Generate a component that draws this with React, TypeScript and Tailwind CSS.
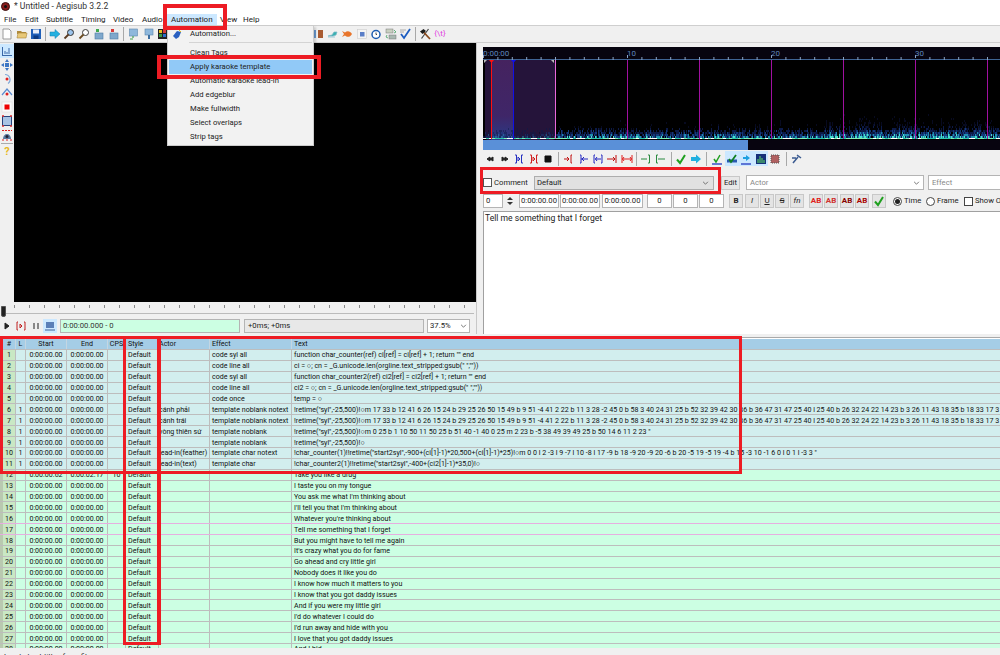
import type { ReactNode } from "react";

const Svg = ({ children }: { children: ReactNode }) => (
  <svg viewBox="0 0 12 12" className="w-3 h-3 block">
    {children}
  </svg>
);

const Tool = ({ children, active }: { children?: ReactNode; active?: boolean }) => (
  <div className={`w-[14.5px] h-[15px] shrink-0 flex items-center justify-center ${active ? "bg-[#cce8ff]" : ""}`}>
    {children}
  </div>
);

const Sep = ({ w = "w-[4px]" }: { w?: string }) => (
  <div className={`${w} h-[14px] shrink-0 flex justify-center`}>
    <div className="w-px h-full bg-[#a8a8a8]" />
  </div>
);

// main toolbar icons
const icons: Record<string, ReactNode> = {
  page: <path d="M2 1h6l2 2v8H2z" fill="#fff" stroke="#9a9a9a" />,
  folder: (
    <>
      <path d="M1 3h4l1 1h4v2H1z" fill="#b08a3c" />
      <path d="M1 10l1-5h9l-1 5z" fill="#e8c878" stroke="#a88436" strokeWidth=".6" />
    </>
  ),
  save: (
    <>
      <rect x="1" y="1" width="10" height="10" fill="#1f5fb8" />
      <rect x="3" y="1.5" width="6" height="4" fill="#e8eef8" />
      <rect x="3.5" y="7.5" width="5" height="3.5" fill="#0d3a80" />
    </>
  ),
  jump: <path d="M1 4h5V1.5L11 6l-5 4.500V8H1z" fill="#22b0e0" stroke="#127fb0" strokeWidth=".5" />,
  zoomIn: (
    <>
      <circle cx="7.500" cy="4.500" r="3" fill="#9cc4ec" stroke="#333" />
      <path d="M5.500 6.500L1.500 10.500" stroke="#5a3a20" strokeWidth="1.800" />
    </>
  ),
  zoomOut: (
    <>
      <circle cx="7.500" cy="4.500" r="3" fill="#fff" stroke="#3c3c3c" />
      <path d="M5.500 6.500L1.500 10.500" stroke="#6a4a20" strokeWidth="1.800" />
    </>
  ),
  propsDoc: (
    <>
      <rect x="3" y="5" width="8" height="6" fill="#7fa8cc" stroke="#4d7ca6" strokeWidth=".6" />
      <rect x="4" y="1" width="3" height="3" fill="#40a850" />
    </>
  ),
  fontsDoc: (
    <>
      <rect x="3" y="5" width="8" height="6" fill="#7fa8cc" stroke="#4d7ca6" strokeWidth=".6" />
      <rect x="4" y="1" width="3" height="3" fill="#d83a3a" />
    </>
  ),
  monitor: (
    <>
      <rect x="1.500" y="1" width="8" height="7" fill="#8fb8dc" stroke="#5c87ad" strokeWidth=".6" />
      <path d="M5 8v2M2 11h3" stroke="#44a050" strokeWidth="1.200" />
    </>
  ),
  pin: (
    <>
      <rect x="2" y="1" width="8" height="6" fill="#8fb8dc" stroke="#5c87ad" strokeWidth=".6" />
      <path d="M6 7v4" stroke="#3c6ea0" strokeWidth="2" />
    </>
  ),
  mosaic: (
    <>
      <rect x="1" y="1" width="10" height="10" fill="#222" />
      <rect x="2" y="2" width="3" height="3" fill="#e6c020" />
      <rect x="6" y="2" width="3" height="3" fill="#d83a3a" />
      <rect x="2" y="6" width="3" height="3" fill="#3a9a40" />
      <rect x="6" y="6" width="3" height="3" fill="#2a70d0" />
    </>
  ),
  split: (
    <>
      <rect x="6" y="2" width="5" height="8" fill="#a85a30" />
      <rect x="1" y="2" width="3" height="8" fill="#6a9ad0" />
    </>
  ),
  teal: <path d="M1 8l4-1 2-3 3 0-1 3-3 1zM1 9h7" fill="#38b0b0" stroke="#7cb8c8" strokeWidth=".7" />,
  fish: <path d="M1 3l2 3-2 3 3-1.500c2 2 5 2 7-1.500-2-3.500-5-3.500-7-1.500z" fill="#e8742a" />,
  square: (
    <>
      <rect x="1.500" y="1.500" width="9" height="9" fill="#f4f4f4" stroke="#ccc" strokeWidth=".6" />
      <rect x="4" y="4" width="4.500" height="4.500" fill="#5a7ec8" />
    </>
  ),
  clock: (
    <>
      <circle cx="6" cy="6.500" r="4" fill="#fff" stroke="#1c5cb0" strokeWidth="1.500" />
      <path d="M6 4.500v2h1" stroke="#222" strokeWidth=".8" fill="none" />
    </>
  ),
  textDoc: (
    <>
      <rect x="1" y="1" width="7" height="4" fill="#c8d0c0" stroke="#777" strokeWidth=".5" />
      <rect x="4" y="7" width="7" height="4" fill="#a8b8b0" stroke="#777" strokeWidth=".5" />
      <path d="M9 2l2 2-2 1M2 7L1 9l2 1" stroke="#40a060" fill="none" strokeWidth=".8" />
    </>
  ),
  bluecheck: (
    <>
      <path d="M1 2h6M1 4h4" stroke="#999" strokeWidth=".8" />
      <path d="M2 6l3 4 6-9" stroke="#1c5cc0" strokeWidth="1.800" fill="none" />
    </>
  ),
  hammer: (
    <>
      <path d="M9.500 1L2.500 10.500" stroke="#444" strokeWidth="1.200" />
      <path d="M4.500 4l6.500 7" stroke="#8a4a1c" strokeWidth="1.800" />
      <path d="M1 3.500L4.500 1 7 3 3.500 6z" fill="#1c1c1c" />
    </>
  ),
};

const MainIcon = ({ name }: { name: string }) => <Svg>{icons[name]}</Svg>;

// little square for the side bar
const side: ReactNode[] = [
  <path key="a" d="M1 10.500h10M1.500 2v8.500M4 6v3M6 7v2M8 3v6" stroke="#3b68a8" strokeWidth="1" fill="none" />,
  <path key="b" d="M6 0l2 3H4zM6 12l2-3H4zM0 6l3-2v4zM12 6L9 4v4z M4 4h4v4H4z" fill="#3d76c4" />,
  <>
    <path d="M4 1.500a5 5 0 0 1 3 9" stroke="#7fa8d8" strokeWidth="1.200" fill="none" />
    <circle cx="6" cy="6" r="1.500" fill="#e02020" />
  </>,
  <>
    <path d="M1 8l5-6 5 6" stroke="#5a8cd0" strokeWidth="1.200" fill="none" />
    <circle cx="6" cy="7" r="1.500" fill="#e02020" />
  </>,
  <>
    <rect x="1" y="1" width="10" height="10" fill="#fafafa" stroke="#ddd" strokeWidth=".6" />
    <rect x="3.500" y="3.500" width="5" height="5" fill="#ee0000" />
  </>,
  <>
    <rect x="1.500" y="1.500" width="9" height="9" fill="#a8c4e4" stroke="#26447c" />
    <path d="M1 1h2M9 1h2M1 11h2M9 11h2" stroke="#e03030" strokeWidth="1.500" />
  </>,
  <>
    <path d="M2 10a4 5 0 0 1 8 0z" fill="#5a7aa0" />
    <circle cx="6" cy="7.500" r="1.500" fill="#223" />
    <path d="M1 1.500h10M1 11h2M9 11h2M5 11h2" stroke="#e02020" strokeWidth="1.200" strokeDasharray="2 1" />
  </>,
];

// audio toolbar glyph: line with arrows and brackets
const AudioIcon = ({ d, color, fill }: { d: string; color: string; fill?: boolean }) => (
  <Svg>
    <path d={d} stroke={color} fill={fill ? color : "none"} strokeWidth="1" />
  </Svg>
);

const audioA = [
  { d: "M6 4v4L3 6zM9 4v4L6 6z", color: "#222", fill: true },
  { d: "M3 4v4l3-2zM6 4v4l3-2z", color: "#222", fill: true },
  { d: "M2 2h1.500v8H2M10 2H8.500v8H10M5 4v4l2-2z", color: "#2530c0" },
  { d: "M2 2h1.500v8H2M10 2H8.500v8H10M5 4v4l2-2z", color: "#d02020" },
  { d: "M3 3h6v6H3z", color: "#111", fill: true },
];
const audioB = [
  { d: "M1 6h5M4 4l2 2-2 2M9 2H8v8h1", color: "#c01010" },
  { d: "M3 2h1v8H3M4 6h7M7 4L5 6l2 2", color: "#2428c0" },
  { d: "M3 2H2v8h1M9 2h1v8H9M3 6h6M5 4L3.500 6 5 8", color: "#2428c0" },
  { d: "M1 6h8M7 4l2 2-2 2M10 2v8", color: "#c01010" },
  { d: "M1 2v8M11 2v8M1 6h10M3 4L1.500 6 3 8M9 4l1.500 2L9 8", color: "#e02020" },
];
const audioC = [
  { d: "M1 6h6M8 2h1.500v8H8", color: "#2a8a40" },
  { d: "M3 2H1.500v8H3M3 6h7", color: "#2a8a40" },
];

const Check = () => (
  <Svg>
    <path d="M2 6.500l3 3.500 5-8" stroke="#20a020" strokeWidth="2" fill="none" />
  </Svg>
);

// pseudo random generator so the spectrogram stays the same on every load
let seed = 7;
const rnd = () => {
  seed = (seed * 16807) % 2147483647;
  return seed / 2147483647;
};

const specCells: { x: number; y: number; c: string }[] = [];
for (let x = 0; x < 517; x += 1) {
  const loud = x > 340 ? 1.5 : x > 75 ? 1 : 0.7;
  const streak = 0.35 + rnd() * 0.8;
  for (let y = 136; y >= 84; y -= 2) {
    const h = (136 - y) / 52;
    // faint noise high up, the bright part stays close to the bottom line
    const v = rnd() * streak * loud * Math.pow(1 - h, 12);
    const faint = rnd() * streak * loud * Math.pow(1 - h, 2);
    if (v > 0.08) {
      const c = v > 0.7 ? "#49e0c8" : v > 0.42 ? "#1f8fb0" : v > 0.2 ? "#143a7c" : "#0c1a48";
      specCells.push({ x, y, c });
    } else if (faint > 0.5) {
      specCells.push({ x, y, c: faint > 0.8 ? "#0b1436" : "#070a20" });
    }
  }
}
const specBase: { x: number; w: number; c: string }[] = [];
for (let x = 0; x < 517; x += 3) {
  const v = rnd();
  specBase.push({ x, w: 3, c: v > 0.75 ? "#ffffff" : v > 0.4 ? "#7ff0b8" : "#2ec8b0" });
}

const AudioDisplay = () => (
  <svg viewBox="483 47 517 93" className="w-[517px] h-[93px] block">
    <rect x="483" y="47" width="517" height="93" fill="#000" />
    <rect x="483" y="47" width="517" height="12" fill="#07040f" />
    <defs>
      <linearGradient id="sel" x1="0" y1="0" x2="0" y2="1">
        <stop offset="0" stopColor="#45235f" />
        <stop offset="0.7" stopColor="#3f2668" />
        <stop offset="1" stopColor="#2a3a86" />
      </linearGradient>
    </defs>
    <rect x="485" y="60" width="70" height="80" rx="3" fill="#25143a" />
    <rect x="491" y="60" width="22" height="80" fill="url(#sel)" />
    {specCells.map((s, i) => (
      <rect key={i} x={483 + s.x} y={s.y} width="1" height="2" fill={s.c} fillOpacity={s.x < 72 ? 0.5 : 1} />
    ))}
    {specBase.map((s, i) => (
      <rect key={i} x={483 + s.x} y="138" width={s.w} height="1" fill={s.c} />
    ))}
    <path d="M483 59.500H1000" stroke="#3f6494" />
    {Array.from({ length: 36 }, (_, i) => (
      <path key={i} d={`M${483 + i * 14.4 + 0.5} ${i % 10 === 0 ? 55 : 57}v3`} stroke="#8ba4c4" />
    ))}
    {[627, 699, 771, 843, 915, 987].map((x) => (
      <rect key={x} x={x} y="60" width="1" height="79" fill="#a010a0" />
    ))}
    <rect x="555" y="60" width="1" height="79" fill="#e868d8" />
    <rect x="491" y="60" width="1" height="79" fill="#ff1010" />
    <rect x="513" y="60" width="1" height="79" fill="#1010e8" />
    <path d="M489 60h5l-2.500 3z" fill="#ff1010" />
    <path d="M511 60h5l-2.500 3z" fill="#1010e8" />
    <path d="M484 60h3l-3 3zM554 60h-3l3 3z" fill="#bbb" />
    <text x="483" y="56" fill="#5f86bd" fontSize="8" fontFamily="Roboto, sans-serif">0:00:00</text>
    <text x="627" y="56" fill="#5f86bd" fontSize="8" fontFamily="Roboto, sans-serif">10</text>
    <text x="771" y="56" fill="#5f86bd" fontSize="8" fontFamily="Roboto, sans-serif">20</text>
    <text x="915" y="56" fill="#5f86bd" fontSize="8" fontFamily="Roboto, sans-serif">30</text>
  </svg>
);

const Field = ({ w, children, center, cls = "" }: { w: string; children?: ReactNode; center?: boolean; cls?: string }) => (
  <div className={`${w} h-[14px] shrink-0 border border-[#b4b4b4] bg-white flex items-center px-[2px] whitespace-nowrap ${center ? "justify-center" : ""} ${cls}`}>
    {children}
  </div>
);

const Btn = ({ children, cls = "" }: { children: ReactNode; cls?: string }) => (
  <div className={`w-[14px] h-[14px] shrink-0 border border-[#c8c8c8] bg-[#e4e4e4] flex items-center justify-center text-[8px] ${cls}`}>
    {children}
  </div>
);

type Row = { n: number; l?: string; start?: string; end?: string; cps?: string; actor?: string; effect?: string; text: string; comment?: boolean; active?: boolean };

const long6 =
  '!retime("syl",-25,500)!○m 17 33 b 12 41 6 26 15 24 b 29 25 26 50 15 49 b 9 51 -4 41 2 22 b 11 3 28 -2 45 0 b 58 3 40 24 31 25 b 52 32 39 42 30 36 b 36 47 31 47 25 40 l 25 40 b 26 32 24 22 14 23 b 3 26 11 43 18 35 b 18 33 17 3';

const rows: Row[] = [
  { n: 1, effect: "code syl all", text: 'function char_counter(ref) ci[ref] = ci[ref] + 1; return "" end', comment: true },
  { n: 2, effect: "code line all", text: 'ci = ○; cn = _G.unicode.len(orgline.text_stripped:gsub(" ",""))', comment: true },
  { n: 3, effect: "code syl all", text: 'function char_counter2(ref) ci2[ref] = ci2[ref] + 1; return "" end', comment: true },
  { n: 4, effect: "code line all", text: 'ci2 = ○; cn = _G.unicode.len(orgline.text_stripped:gsub(" ",""))', comment: true },
  { n: 5, effect: "code once", text: "temp = ○", comment: true },
  { n: 6, l: "1", actor: "cánh phải", effect: "template noblank notext", text: long6, comment: true },
  { n: 7, l: "1", actor: "cánh trái", effect: "template noblank notext", text: long6, comment: true },
  { n: 8, l: "1", actor: "vòng thiên sứ", effect: "template noblank", text: '!retime("syl",-25,500)!○m 0 25 b 1 10 50 11 50 25 b 51 40 -1 40 0 25 m 2 23 b -5 38 49 39 49 25 b 50 14 6 11 2 23 "', comment: true },
  { n: 9, l: "1", effect: "template noblank", text: '!retime("syl",-25,500)!○', comment: true },
  { n: 10, l: "1", actor: "lead-in(feather)", effect: "template char notext", text: '!char_counter(1)!!retime("start2syl",-900+(ci[1]-1)*20,500+(ci[1]-1)*25)!○m 0 0 l 2 -3 l 9 -7 l 10 -8 l 17 -9 b 18 -9 20 -9 20 -6 b 20 -5 19 -5 19 -4 b 15 -3 10 -1 6 0 l 0 1 l -3 3 "', comment: true },
  { n: 11, l: "1", actor: "lead-in(text)", effect: "template char", text: '!char_counter2(1)!!retime("start2syl",-400+(ci2[1]-1)*35,0)!○', comment: true },
  { n: 12, start: "0:00:00.62", end: "0:00:02.17", cps: "10", text: "Take you like a drug" },
  { n: 13, text: "I taste you on my tongue" },
  { n: 14, text: "You ask me what I'm thinking about" },
  { n: 15, text: "I'll tell you that I'm thinking about" },
  { n: 16, text: "Whatever you're thinking about" },
  { n: 17, text: "Tell me something that I forget", active: true },
  { n: 18, text: "But you might have to tell me again" },
  { n: 19, text: "It's crazy what you do for fame" },
  { n: 20, text: "Go ahead and cry little girl" },
  { n: 21, text: "Nobody does it like you do" },
  { n: 22, text: "I know how much it matters to you" },
  { n: 23, text: "I know that you got daddy issues" },
  { n: 24, text: "And if you were my little girl" },
  { n: 25, text: "I'd do whatever I could do" },
  { n: 26, text: "I'd run away and hide with you" },
  { n: 27, text: "I love that you got daddy issues" },
  { n: 28, text: "And I hid" },
];

const cell = "h-full shrink-0 border-r border-[#bdbdbd] flex items-center whitespace-nowrap overflow-hidden";

const GridRow = ({ r }: { r: Row }) => {
  const bg = r.comment ? "bg-[#d2eeee]" : "bg-[#ccffe3]";
  const line = r.active || r.n === 16 ? "border-b border-[#e6aee0]" : "border-b border-[#bdbdbd]";
  return (
    <div className={`h-[10.9px] flex shrink-0 ${bg} ${line}`}>
      <div className={`w-[3px] shrink-0 h-full ${r.comment ? "bg-[#d2eeee]" : "bg-[#b9c9b0]"}`} />
      <div className={`${cell} w-[13px] justify-center bg-[#c9e8c4]`}>{r.n}</div>
      <div className={`${cell} w-[10px] justify-center`}>{r.l}</div>
      <div className={`${cell} w-[41px] justify-center`}>{r.start ?? "0:00:00.00"}</div>
      <div className={`${cell} w-[41px] justify-center`}>{r.end ?? "0:00:00.00"}</div>
      <div className={`${cell} w-[18px] justify-center`}>{r.cps}</div>
      <div className={`${cell} w-[33px] pl-[2px]`}>Default</div>
      <div className={`${cell} w-[51px]`}>{r.actor}</div>
      <div className={`${cell} w-[82px] pl-[2px]`}>{r.effect}</div>
      <div className="h-full flex-1 flex items-center whitespace-nowrap overflow-hidden pl-[2px]">{r.text}</div>
    </div>
  );
};

const GridHeader = () => {
  const h = "h-full shrink-0 border-r border-[#c4d6e2] flex items-center";
  return (
    <div className="h-[11px] flex shrink-0 bg-[#a5cde6] border-b border-[#bdbdbd]">
      <div className="w-[3px] shrink-0" />
      <div className={`${h} w-[13px] justify-center`}>#</div>
      <div className={`${h} w-[10px] justify-center`}>L</div>
      <div className={`${h} w-[41px] justify-center`}>Start</div>
      <div className={`${h} w-[41px] justify-center`}>End</div>
      <div className={`${h} w-[18px] justify-center`}>CPS</div>
      <div className={`${h} w-[33px] pl-[2px]`}>Style</div>
      <div className={`${h} w-[51px]`}>Actor</div>
      <div className={`${h} w-[82px] pl-[2px]`}>Effect</div>
      <div className="h-full flex-1 flex items-center pl-[2px]">Text</div>
    </div>
  );
};

const menuItems = ["Clean Tags", "Apply karaoke template", "Automatic karaoke lead-in", "Add edgeblur", "Make fullwidth", "Select overlaps", "Strip tags"];

export default function App() {
  return (
    <div className="relative w-[1000px] h-[655px] overflow-hidden bg-[#f0f0f0] text-[7.7px] leading-none text-[#222] font-['Roboto',sans-serif]">
      {/* Title */}
      <div className="h-[13px] bg-white flex items-center pl-[1px]">
        <div className="w-[9px] h-[9px] rounded-full bg-[#8a1c1c] border border-[#3a1010] flex items-center justify-center">
          <div className="w-[3px] h-[3px] rounded-full bg-[#111]" />
        </div>
        <span className="ml-[4px] text-[8.6px] text-[#333]">* Untitled - Aegisub 3.2.2</span>
      </div>

      {/* Menu bar */}
      <div className="h-[12px] bg-white flex items-center pl-[4px] text-[8px] pt-[1px]">
        <span className="w-[21px]">File</span>
        <span className="w-[21px]">Edit</span>
        <span className="w-[35px]">Subtitle</span>
        <span className="w-[32px]">Timing</span>
        <span className="w-[29px]">Video</span>
        <span className="w-[25px]">Audio</span>
        <span className="w-[50px] h-full bg-[#cce8ff] flex items-center pl-[4px]">Automation</span>
        <span className="w-[26px] pl-[3px]">View</span>
        <span>Help</span>
      </div>

      {/* Toolbar */}
      <div className="h-[18px] border-t border-b border-[#cfcfcf] bg-[#f0f0f0] flex items-center">
        {["page", "folder", "save"].map((n) => <Tool key={n}><MainIcon name={n} /></Tool>)}
        <Sep />
        {["jump", "zoomIn", "zoomOut", "propsDoc", "fontsDoc"].map((n) => <Tool key={n}><MainIcon name={n} /></Tool>)}
        <Sep w="w-[7px]" />
        {["monitor", "pin", "mosaic", "jump"].map((n, i) => <Tool key={i}><MainIcon name={n} /></Tool>)}
        <div className="w-[126px] shrink-0" />
        {["split", "teal", "fish", "square", "clock", "textDoc", "bluecheck"].map((n) => <Tool key={n}><MainIcon name={n} /></Tool>)}
        <Sep w="w-[5px]" />
        <Tool><MainIcon name="hammer" /></Tool>
        <div className="w-[16px] shrink-0 text-center text-[8px] text-[#e040e0]">{"{\\t}"}</div>
      </div>

      {/* Upper panes */}
      <div className="h-[291px] flex">
        {/* Video pane */}
        <div className="w-[476px] shrink-0 flex flex-col">
          <div className="h-[259px] flex">
            <div className="w-[14px] shrink-0 flex flex-col items-center pt-[1px]">
              {side.map((s, i) => (
                <div key={i} className={`w-[14px] h-[14px] flex items-center justify-center ${i === 0 ? "bg-[#cce8ff]" : ""}`}>
                  <Svg>{s}</Svg>
                </div>
              ))}
              <div className="w-[12px] h-px bg-[#aaa] mt-[1px]" />
              <div className="mt-[2px] text-[11px] font-bold text-[#e8b820]">?</div>
            </div>
            <div className="flex-1 bg-black" />
          </div>
          {/* Seek slider */}
          <div className="h-[16px] relative pl-[14px] pt-[3px]">
            <div className="h-[3px] w-[460px] bg-[repeating-linear-gradient(90deg,#888_0,#888_1px,transparent_1px,transparent_15px)]" />
            <div className="h-px mt-[5px] -ml-[12px] w-[472px] bg-[#bbb]" />
            <div className="absolute left-[1px] top-[4px] w-[5px] h-[11px] rounded-b-[2px] bg-[#222] border border-[#555]" />
          </div>
          {/* Video controls */}
          <div className="h-[16px] flex items-center">
            <div className="w-[13px] shrink-0 flex justify-center"><AudioIcon d="M4 3v6l4-3z" color="#222" fill /></div>
            <div className="w-[15px] shrink-0 flex justify-center"><AudioIcon d="M3 2H2v8h1M9 2h1v8H9M5 4v4l2-2z" color="#c02020" /></div>
            <div className="w-[15px] shrink-0 flex justify-center"><AudioIcon d="M4 3v6M8 3v6" color="#222" /></div>
            <div className="w-[14px] h-[14px] shrink-0 bg-[#cce8ff] flex items-center justify-center">
              <Svg><rect x="2" y="2" width="8" height="6" fill="#5a7fb8" /><path d="M1 10h10" stroke="#3c5f98" /></Svg>
            </div>
            <Field w="w-[180px] ml-[3px]" cls="!bg-[#ccffe3] text-[#333]">0:00:00.000 - 0</Field>
            <Field w="w-[180px] ml-[4px]" cls="!bg-[#e8e8e8] pl-[3px]">+0ms; +0ms</Field>
            <Field w="w-[43px] ml-[3px]" cls="justify-between">
              <span>37.5%</span>
              <svg viewBox="0 0 8 5" className="w-[7px] h-[4px]"><path d="M1 1l3 3 3-3" stroke="#555" fill="none" /></svg>
            </Field>
          </div>
        </div>

        {/* Sash */}
        <div className="w-[7px] shrink-0 border-l border-[#c8c8c8]" />

        {/* Audio + edit pane */}
        <div className="flex-1 min-w-0 flex flex-col overflow-hidden">
          <div className="pt-[4px]">
            <AudioDisplay />
            <div className="h-[10px] flex bg-[#07040f]">
              <div className="w-[265px] bg-[#5a90d8]" />
            </div>
          </div>
          {/* Audio toolbar */}
          <div className="h-[17px] flex items-center">
            {audioA.map((a, i) => <Tool key={i}><AudioIcon {...a} /></Tool>)}
            <Sep w="w-[6px]" />
            {audioB.map((a, i) => <Tool key={i}><AudioIcon {...a} /></Tool>)}
            <Sep w="w-[5px]" />
            {audioC.map((a, i) => <Tool key={i}><AudioIcon {...a} /></Tool>)}
            <Sep w="w-[6px]" />
            <Tool><Check /></Tool>
            <Tool><Svg><path d="M1 4h5V1.500L11 6l-5 4.500V8H1z" fill="#22b0e0" /></Svg></Tool>
            <Sep w="w-[7px]" />
            <Tool><Svg><path d="M3 6l2 3 4-7" stroke="#20a020" strokeWidth="1.500" fill="none" /><path d="M1 11h10" stroke="#3a50c8" strokeWidth="1.500" /></Svg></Tool>
            <Tool active><Svg><path d="M1 8h10" stroke="#2a5ab0" strokeWidth="3" /><path d="M3 6l2 3 5-7" stroke="#108020" strokeWidth="1.800" fill="none" /></Svg></Tool>
            <Tool active><Svg><path d="M3 4h3V2l4 3-4 3V6H3z" fill="#1fa0e0" /><path d="M1 11h10" stroke="#3a50c8" strokeWidth="1.500" /></Svg></Tool>
            <Tool active><Svg><rect x="1" y="1" width="10" height="10" fill="#16307a" /><path d="M3 10V6M5 10V3M7 10V5M9 10V7" stroke="#60e060" /></Svg></Tool>
            <Tool><Svg><rect x="2" y="2" width="8" height="8" fill="#b06060" stroke="#555" strokeDasharray="1 1" /></Svg></Tool>
            <Sep w="w-[7px]" />
            <Tool><Svg><path d="M2 10l5-6M6 2l4 3M1 5h4" stroke="#3a5a90" strokeWidth="1.500" fill="none" /></Svg></Tool>
          </div>

          {/* Comment / style row */}
          <div className="h-[26px] flex items-center pt-[5px]">
            <div className="w-[9px] h-[9px] border border-[#555] bg-white shrink-0" />
            <span className="ml-[2px] w-[39px] shrink-0">Comment</span>
            <div className="w-[180px] h-[14px] shrink-0 ml-[1px] border border-[#adadad] bg-[#e1e1e1] flex items-center justify-between px-[2px]">
              <span>Default</span>
              <svg viewBox="0 0 8 5" className="w-[7px] h-[4px] mr-[2px]"><path d="M1 1l3 3 3-3" stroke="#555" fill="none" /></svg>
            </div>
            <div className="ml-[7px] w-[19px] h-[14px] shrink-0 border border-[#c8c8c8] bg-[#e8e8e8] flex items-center justify-center">Edit</div>
            <div className="ml-[6px] w-[178px] h-[15px] shrink-0 border border-[#b4b4b4] bg-white flex items-center justify-between px-[3px] text-[#888]">
              <span>Actor</span>
              <svg viewBox="0 0 8 5" className="w-[7px] h-[4px]"><path d="M1 1l3 3 3-3" stroke="#555" fill="none" /></svg>
            </div>
            <div className="ml-[4px] w-[90px] h-[15px] shrink-0 border border-[#b4b4b4] bg-white flex items-center px-[3px] text-[#888]">Effect</div>
          </div>

          {/* Time row */}
          <div className="h-[14px] mt-[1px] flex items-center">
            <Field w="w-[20px]">0</Field>
            <div className="w-[13px] h-[14px] shrink-0 flex flex-col items-center justify-center gap-[2px]">
              <div className="w-0 h-0 border-x-[3px] border-x-transparent border-b-[3px] border-b-[#333]" />
              <div className="w-0 h-0 border-x-[3px] border-x-transparent border-t-[3px] border-t-[#333]" />
            </div>
            <Field w="w-[40px] ml-[3px]" center>0:00:00.00</Field>
            <Field w="w-[40px] ml-[1px]" center>0:00:00.00</Field>
            <Field w="w-[41px] ml-[2px]" center>0:00:00.00</Field>
            <Field w="w-[25px] ml-[4px]" center>0</Field>
            <Field w="w-[25px] ml-[1px]" center>0</Field>
            <Field w="w-[25px] ml-[1px]" center>0</Field>
            <Btn cls="ml-[5px] font-bold">B</Btn>
            <Btn cls="ml-[2px] italic">I</Btn>
            <Btn cls="ml-[1px] underline">U</Btn>
            <Btn cls="ml-[1px] line-through">S</Btn>
            <Btn cls="ml-[1px] italic">fn</Btn>
            <Btn cls="ml-[5px] font-bold text-[#e02020] text-[7px]">AB</Btn>
            <Btn cls="ml-[1px] font-bold text-[#d03030] text-[7px]">AB</Btn>
            <Btn cls="ml-[2px] font-bold text-[#800] text-[7px]">AB</Btn>
            <Btn cls="ml-[1px] font-bold text-[#a00] text-[7px]">AB</Btn>
            <Btn cls="ml-[3px]"><Check /></Btn>
            <div className="ml-[7px] w-[9px] h-[9px] rounded-full border border-[#444] bg-white flex items-center justify-center shrink-0">
              <div className="w-[5px] h-[5px] rounded-full bg-[#222]" />
            </div>
            <span className="ml-[2px] w-[22px] shrink-0">Time</span>
            <div className="w-[9px] h-[9px] rounded-full border border-[#444] bg-white shrink-0" />
            <span className="ml-[2px] w-[27px] shrink-0">Frame</span>
            <div className="w-[9px] h-[9px] border border-[#444] bg-white shrink-0" />
            <span className="ml-[2px] whitespace-nowrap">Show O</span>
          </div>

          {/* Text box */}
          <div className="mt-[3px] flex-1 border-l border-t border-[#a0a0a0] bg-white pl-[1px] pt-[2px] text-[8.6px]">
            Tell me something that I forget
          </div>
        </div>
      </div>

      {/* Subtitle grid */}
      <div className="mt-[3px] h-[311px] flex flex-col overflow-hidden border-t border-[#aaa] text-[7.1px] text-[#111]">
        <div className="h-px bg-white shrink-0" />
        <GridHeader />
        {rows.map((r) => <GridRow key={r.n} r={r} />)}
      </div>

      {/* Status bar */}
      <div className="h-[7px] overflow-hidden pl-[4px] pt-[5px] whitespace-nowrap">Loaded subtitles from file.</div>

      {/* Automation menu */}
      <div className="absolute left-[167px] top-[25px] w-[147px] h-[121px] bg-[#f2f2f2] border border-[#ccc] shadow-[2px_2px_2px_rgba(0,0,0,0.15)] pt-[1px] px-[1px]">
        <div className="h-[13px] flex items-center">
          <div className="w-[14px] ml-[1px] flex justify-center">
            <Svg><path d="M2 8l4-5 4 1-2 5-3 2z" fill="#2a60c0" /><path d="M8 2l2 2" stroke="#e0c020" /></Svg>
          </div>
          <span className="ml-[6px]">Automation...</span>
        </div>
        <div className="h-px bg-[#d4d4d4] mt-[2px] mb-[2px] ml-[20px]" />
        <div className="flex flex-col pt-[1px]">
          {menuItems.map((m, i) => (
            <div key={m} className={`h-[14px] flex items-center pl-[21px] ${i === 1 ? "bg-[#91c9f7]" : ""}`}>{m}</div>
          ))}
        </div>
      </div>

      {/* Red annotation boxes */}
      <div className="absolute left-[163px] top-[4px] w-[64px] h-[26px] border-[4px] border-[#ed1c24]" />
      <div className="absolute left-[157px] top-[55px] w-[164px] h-[24px] border-[4px] border-[#ed1c24]" />
      <div className="absolute left-[480px] top-[167px] w-[241px] h-[27px] border-[3px] border-[#ed1c24]" />
      <div className="absolute left-0 top-[336px] w-[742px] h-[138px] border-[3px] border-[#ed1c24]" />
      <div className="absolute left-[123px] top-[336px] w-[38px] h-[309px] border-[3px] border-r-[4px] border-[#ed1c24]" />
    </div>
  );
}
